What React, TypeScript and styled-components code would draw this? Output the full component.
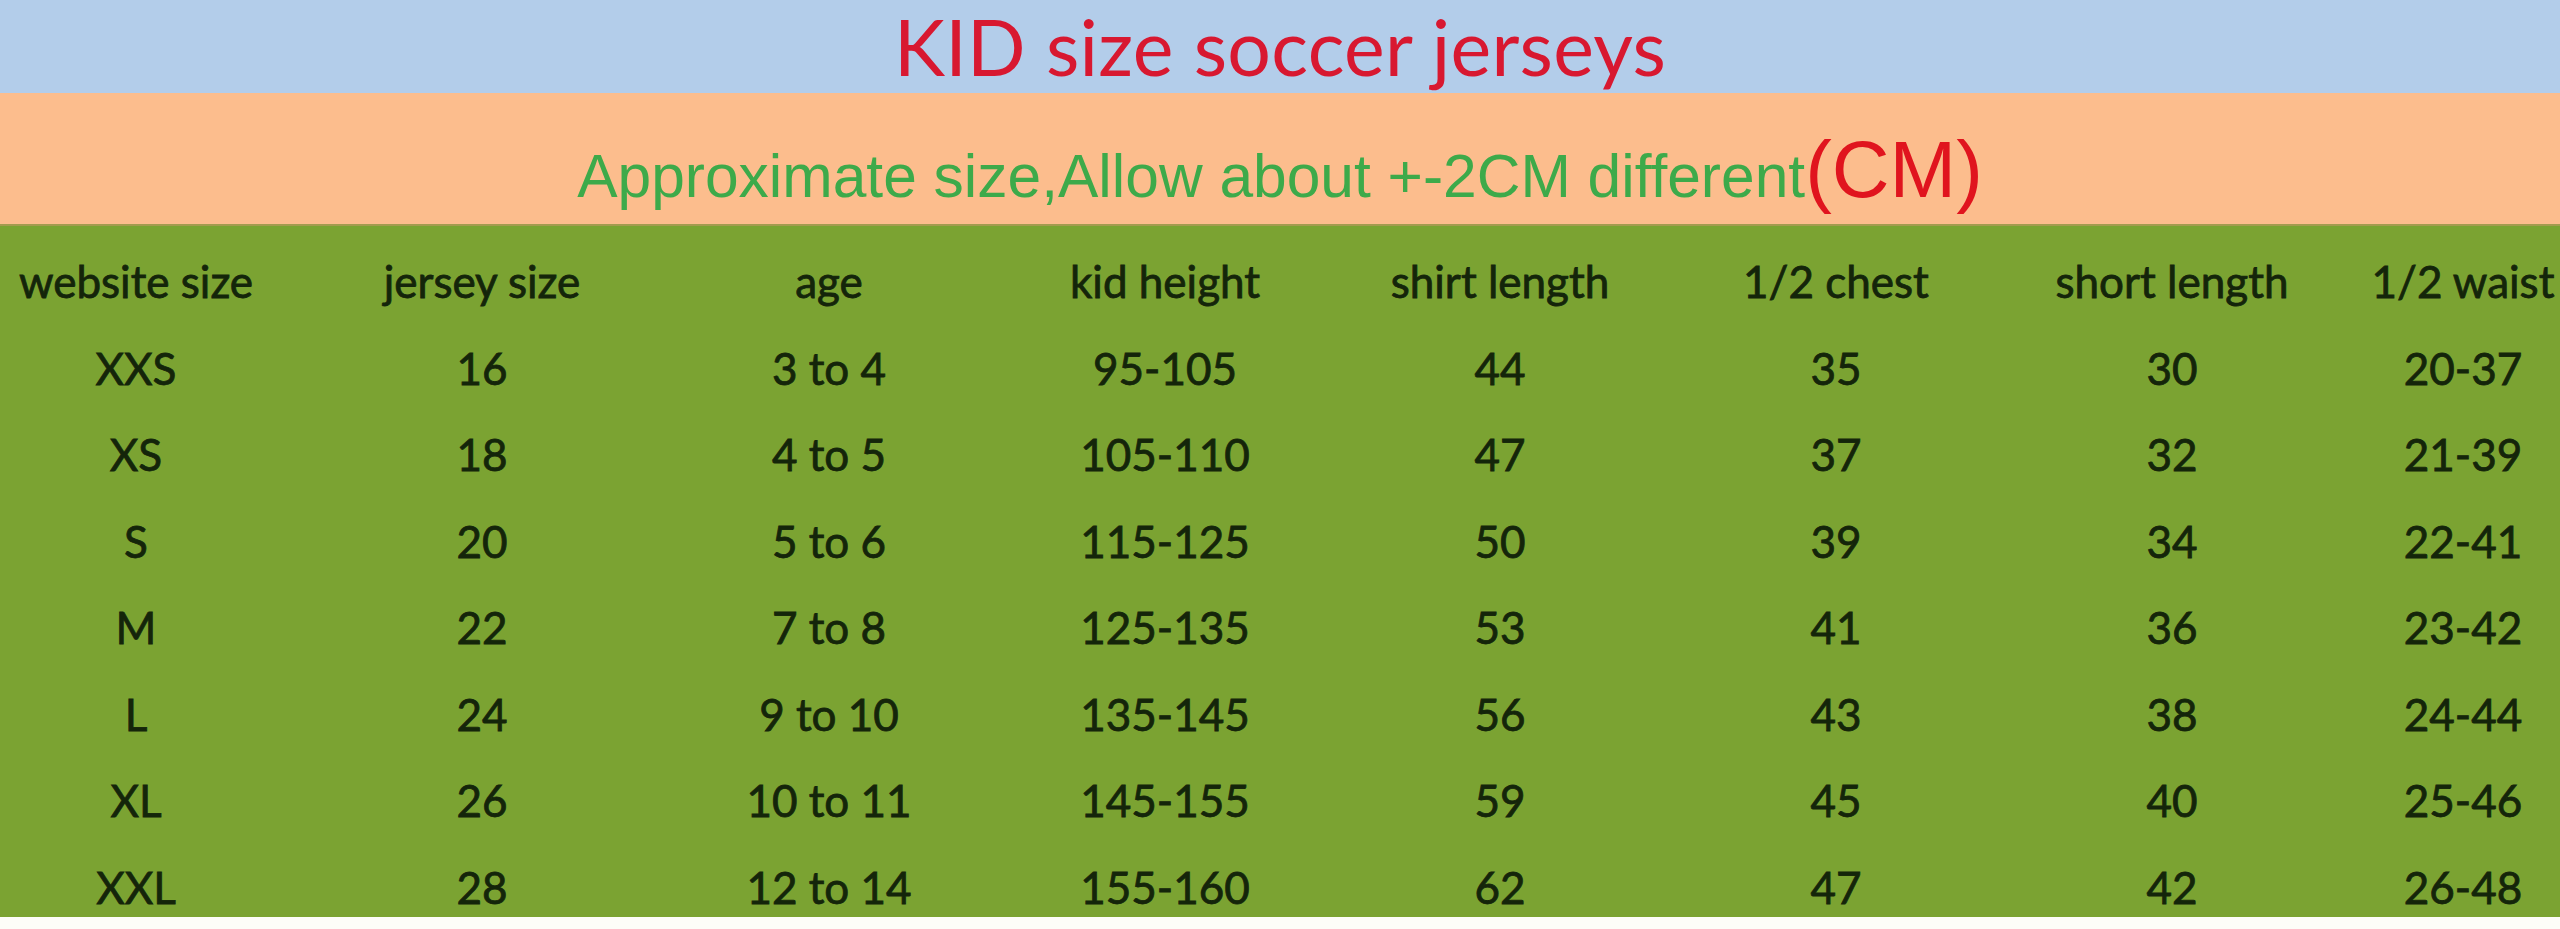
import styled, { createGlobalStyle } from "styled-components";

/*
    Kid size chart for soccer jerseys:
    title band, note band, then the size table on green
*/

const GlobalStyle = createGlobalStyle`
    html, body {
        margin: 0;
        padding: 0;
        background-color: #fdfdf8;
    }
    body {
        font-family: Lato, "Liberation Sans", sans-serif;
    }
`

const Page = styled.main`
    width: 2560px;
    height: 929px;
    display: flex;
    flex-direction: column;
    overflow: hidden;
`

const TitleBand = styled.header`
    height: 93px;
    flex: 0 0 93px;
    background-color: #b3cdea;
    display: flex;
    align-items: center;
    justify-content: center;
`

const Title = styled.h1`
    margin: 0;
    font-family: Lato, sans-serif;
    font-weight: 400;
    font-size: 77px;
    line-height: 1.2;
    letter-spacing: 0.3px;
    color: #d81830;
    white-space: nowrap;
`

const NoteBand = styled.div`
    height: 131px;
    flex: 0 0 131px;
    box-sizing: border-box;
    background-color: #fcbd8d;
    display: flex;
    align-items: flex-end;
    justify-content: center;
    padding-bottom: 8px;
`

const Note = styled.p`
    margin: 0;
    font-family: "Liberation Sans", Arial, sans-serif;
    font-size: 80px;
    line-height: 1.15;
    white-space: nowrap;
`

const NoteText = styled.span<{ $tone: "green" | "red" }>`
    font-size: ${props => props.$tone === "green" ? "60.5px" : "80px"};
    color: ${props => props.$tone === "green" ? "#3daa4a" : "#e0141e"};
`

// column widths chosen so each column's centre sits where the chart has it
const COLUMNS = "272px 420px 274px 398px 272px 400px 272px 310px";

const Table = styled.section`
    height: 693px;
    flex: 0 0 693px;
    box-sizing: border-box;
    padding-top: 12px;
    background-color: #7ba332;
    border-top: 2px solid #a39b4f;
    overflow: hidden;
`

const Row = styled.div`
    display: grid;
    grid-template-columns: ${COLUMNS};
    height: 86.5px;
    align-items: center;
`

const Cell = styled.div`
    text-align: center;
    font-family: Lato, sans-serif;
    font-size: 44px;
    line-height: 86px;
    color: #14250a;
    -webkit-text-stroke: 0.8px #14250a;
    white-space: nowrap;
`

// ~~~~~~~~~~~~~~~~~~~~~~~~~~~~~~~~~~~~~~~~~~~~~~~~~~~~~~~~~~~~~~

const headers = [
    "website size", "jersey size", "age", "kid height",
    "shirt length", "1/2 chest", "short length", "1/2 waist",
];

const sizes: string[][] = [
    ["XXS", "16", "3 to 4", "95-105", "44", "35", "30", "20-37"],
    ["XS", "18", "4 to 5", "105-110", "47", "37", "32", "21-39"],
    ["S", "20", "5 to 6", "115-125", "50", "39", "34", "22-41"],
    ["M", "22", "7 to 8", "125-135", "53", "41", "36", "23-42"],
    ["L", "24", "9 to 10", "135-145", "56", "43", "38", "24-44"],
    ["XL", "26", "10 to 11", "145-155", "59", "45", "40", "25-46"],
    ["XXL", "28", "12 to 14", "155-160", "62", "47", "42", "26-48"],
];

export default function App() {
    return (
        <>
        <GlobalStyle />
        <Page>
            <TitleBand>
                <Title>KID size soccer jerseys</Title>
            </TitleBand>

            <NoteBand>
                <Note>
                    <NoteText $tone="green">Approximate size,Allow about +-2CM different</NoteText>
                    <NoteText $tone="red">(CM)</NoteText>
                </Note>
            </NoteBand>

            <Table>
                <Row>
                    {headers.map((h, index) => <Cell key={index}>{h}</Cell>)}
                </Row>
                {sizes.map((row, index) => (
                    <Row key={index}>
                        {row.map((value, i) => <Cell key={i}>{value}</Cell>)}
                    </Row>
                ))}
            </Table>
        </Page>
        </>
    )
}
